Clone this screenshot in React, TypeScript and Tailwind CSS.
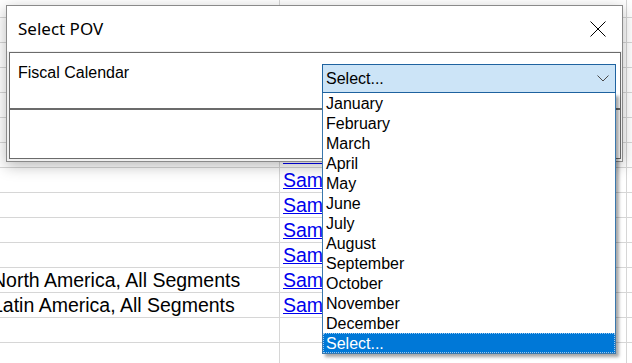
import React from "react";

const months = [
	"January",
	"February",
	"March",
	"April",
	"May",
	"June",
	"July",
	"August",
	"September",
	"October",
	"November",
	"December",
];

// sheet rows behind the dialog: first row is a partial one
const rows: { region?: string; link?: boolean }[] = [
	{},
	{ link: true },
	{ link: true },
	{ link: true },
	{ link: true },
	{ link: true },
	{ link: true },
	{ link: true },
	{ link: true },
	{ link: true },
	{ link: true },
	{ region: "North America, All Segments", link: true },
	{ region: "Latin America, All Segments", link: true },
	{},
	{},
];

function Sheet() {
	return (
		<div className="flex flex-col font-['Liberation_Sans',Arial,sans-serif] text-[19.5px] text-black">
			{rows.map((row, index) => (
				<div
					key={index}
					className={`flex ${index === 0 ? "h-[18px]" : "h-[25px]"} border-b border-[#d6d6d6]`}
				>
					<div className="flex w-[280px] shrink-0 items-center overflow-hidden border-r border-[#d6d6d6] pt-[2px]">
						{row.region && (
							<span className="-ml-[8px] whitespace-nowrap">{row.region}</span>
						)}
					</div>
					<div className="flex w-[347px] shrink-0 items-center overflow-hidden border-r border-[#d6d6d6] pt-[1px] pl-[3px]">
						{row.link && index > 0 && (
							<a className="whitespace-nowrap text-[#0000ee] underline">Sample</a>
						)}
					</div>
					<div className="flex-1" />
				</div>
			))}
		</div>
	);
}

function CloseIcon() {
	return (
		<svg width="16" height="16" viewBox="0 0 16 16" fill="none">
			<path d="M0.5 0.5L15.5 15.5M15.5 0.5L0.5 15.5" stroke="#000" strokeWidth="1" />
		</svg>
	);
}

function Chevron() {
	return (
		<svg width="12" height="7" viewBox="0 0 12 7" fill="none">
			<path d="M0.5 0.5L6 6L11.5 0.5" stroke="#4a4a4a" strokeWidth="1" />
		</svg>
	);
}

function MonthSelect() {
	return (
		<div className="relative mr-[4px] ml-auto w-[294px] font-['Liberation_Sans',Arial,sans-serif] text-[16px] text-black">
			<div className="flex h-[29px] items-center border border-[#1f63a0] bg-[#cce4f7] pr-[6px] pl-[3px]">
				<span className="leading-none">Select...</span>
				<span className="ml-auto flex">
					<Chevron />
				</span>
			</div>
			<div className="absolute top-full right-0 left-0 z-10 flex flex-col border-x border-b border-[#3a78ad] bg-white shadow-[3px_3px_3px_rgba(0,0,0,0.35)]">
				{months.map((month) => (
					<div key={month} className="flex h-[20px] items-center pt-[2px] pl-[3px] leading-none">
						{month}
					</div>
				))}
				<div className="flex h-[20px] items-center bg-[#0078d7] pt-[2px] pl-[3px] leading-none text-white outline outline-1 -outline-offset-1 outline-dotted outline-[#9ec9ee]">
					Select...
				</div>
			</div>
		</div>
	);
}

export default function App() {
	return (
		<div className="relative h-[363px] w-[632px] overflow-hidden bg-white">
			<Sheet />

			{/* Select POV dialog */}
			<div className="absolute top-[5px] left-[6px] flex h-[157px] w-[617px] flex-col border border-[#8a8a8a] bg-white shadow-[0_4px_14px_rgba(0,0,0,0.28)]">
				<div className="flex h-[45px] shrink-0 items-center justify-between pr-[16px] pl-[11px]">
					<h1 className="font-['Noto_Sans',sans-serif] text-[17px] font-normal text-black">
						Select POV
					</h1>
					<CloseIcon />
				</div>
				<div className="flex flex-1 flex-col bg-[#f0f0f0] pt-[1px] pr-[1px] pb-[2px] pl-[2px]">
					<div className="flex flex-1 flex-col border border-[#6b6b6b] bg-white">
						<div className="flex h-[55px] shrink-0 items-start pt-[11px] pl-[8px]">
							<span className="font-['Liberation_Sans',Arial,sans-serif] text-[16px] leading-[18px] text-black">
								Fiscal Calendar
							</span>
							<MonthSelect />
						</div>
						<div className="h-[2px] shrink-0 bg-[#6b6b6b]" />
						<div className="flex-1" />
					</div>
				</div>
			</div>
		</div>
	);
}
